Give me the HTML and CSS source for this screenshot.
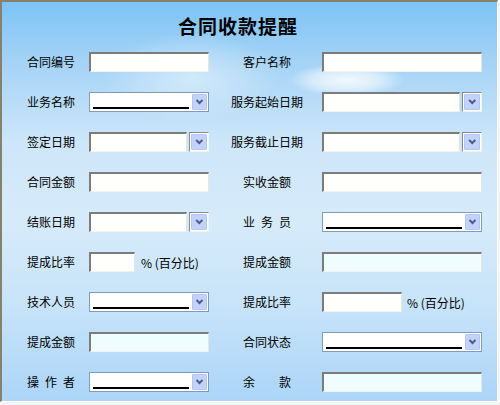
FILE: index.html
```html
<!DOCTYPE html>
<html lang="zh-CN">
    <head>
        <meta charset="utf-8"/>
        <title>合同收款提醒</title>
        <link rel="stylesheet" href="styles.css">
    </head>
    <body>
        <div class="frame">
            <div class="panel">
                <div class="title">合同收款提醒</div>

                <div class="form">
                    <div class="row">
                        <span class="lbl">合同编号</span>
                        <div class="fld-l"><span class="inp w120"></span></div>
                        <div class="lbl-r"><span class="lbl">客户名称</span></div>
                        <div class="fld-r"><span class="inp w160"></span></div>
                    </div>

                    <div class="row">
                        <span class="lbl">业务名称</span>
                        <div class="fld-l">
                            <span class="sel w120"><i class="line"></i><i class="arrow"></i></span>
                        </div>
                        <div class="lbl-r"><span class="lbl wide">服务起始日期</span></div>
                        <div class="fld-r">
                            <span class="inp w137"></span><span class="dbtn"><i class="arrow"></i></span>
                        </div>
                    </div>

                    <div class="row">
                        <span class="lbl">签定日期</span>
                        <div class="fld-l">
                            <span class="inp w97"></span><span class="dbtn"><i class="arrow"></i></span>
                        </div>
                        <div class="lbl-r"><span class="lbl wide">服务截止日期</span></div>
                        <div class="fld-r">
                            <span class="inp w137"></span><span class="dbtn"><i class="arrow"></i></span>
                        </div>
                    </div>

                    <div class="row">
                        <span class="lbl">合同金额</span>
                        <div class="fld-l"><span class="inp w120"></span></div>
                        <div class="lbl-r"><span class="lbl">实收金额</span></div>
                        <div class="fld-r"><span class="inp w160"></span></div>
                    </div>

                    <div class="row">
                        <span class="lbl">结账日期</span>
                        <div class="fld-l">
                            <span class="inp w97"></span><span class="dbtn"><i class="arrow"></i></span>
                        </div>
                        <div class="lbl-r"><span class="lbl">业 务 员</span></div>
                        <div class="fld-r">
                            <span class="sel w160"><i class="line"></i><i class="arrow"></i></span>
                        </div>
                    </div>

                    <div class="row">
                        <span class="lbl">提成比率</span>
                        <div class="fld-l">
                            <span class="inp w46"></span><span class="pct">% (百分比)</span>
                        </div>
                        <div class="lbl-r"><span class="lbl">提成金额</span></div>
                        <div class="fld-r"><span class="inp w160 ro"></span></div>
                    </div>

                    <div class="row">
                        <span class="lbl">技术人员</span>
                        <div class="fld-l">
                            <span class="sel w120"><i class="line"></i><i class="arrow"></i></span>
                        </div>
                        <div class="lbl-r"><span class="lbl">提成比率</span></div>
                        <div class="fld-r">
                            <span class="inp w80"></span><span class="pct">% (百分比)</span>
                        </div>
                    </div>

                    <div class="row">
                        <span class="lbl">提成金额</span>
                        <div class="fld-l"><span class="inp w120 ro"></span></div>
                        <div class="lbl-r"><span class="lbl">合同状态</span></div>
                        <div class="fld-r">
                            <span class="sel w160"><i class="line"></i><i class="arrow"></i></span>
                        </div>
                    </div>

                    <div class="row">
                        <span class="lbl">操 作 者</span>
                        <div class="fld-l">
                            <span class="sel w120"><i class="line"></i><i class="arrow"></i></span>
                        </div>
                        <div class="lbl-r"><span class="lbl">余 款</span></div>
                        <div class="fld-r"><span class="inp w160 ro"></span></div>
                    </div>
                </div>
            </div>
        </div>
    </body>
</html>
```

FILE: styles.css
```css
*{margin:0;padding:0;box-sizing:border-box;}

body{
    background: #f4f4f0;
    font-family: "Noto Sans CJK SC", "DejaVu Sans", sans-serif;
    font-size: 12px;
    color: #000;
}

.frame{
    width: 498px;
    height: 402px;
    border-style: solid;
    border-width: 2px 1px 1px 2px;
    border-color: #86806c #ffffff #ffffff #86806c;
}

.panel{
    height: 100%;
    background:
        radial-gradient(ellipse 58px 17px at 345px 78px, rgba(255,255,255,0.85), rgba(255,255,255,0.5) 60%, rgba(255,255,255,0) 100%),
        radial-gradient(ellipse 90px 45px at 190px 75px, rgba(255,255,255,0.45), rgba(255,255,255,0) 100%),
        linear-gradient(180deg, #7cc3f4 0%, #a2d2f6 14%, #cde6f9 35%, #d6ebfa 55%, #c8e4f9 75%, #acd5f8 100%);
}

.title{
    height: 50px;
    line-height: 48px;
    padding-left: 176px;
    font-size: 19px;
    font-weight: bold;
    letter-spacing: 1px;
}

.form{
    padding-left: 25px;
}

.row{
    display: flex;
    align-items: center;
    height: 20px;
    margin-bottom: 20px;
}

.lbl{
    display: inline-block;
    width: 48px;
    text-align-last: justify;
    white-space: nowrap;
    line-height: 20px;
}

.lbl.wide{
    width: auto;
    text-align-last: auto;
}

.fld-l{
    display: flex;
    align-items: center;
    width: 120px;
    margin-left: 14px;
}

.lbl-r{
    width: 113px;
    padding-left: 3px;
    text-align: center;
}

.fld-r{
    display: flex;
    align-items: center;
    width: 160px;
}

.inp{
    display: block;
    height: 20px;
    background: #fffffc;
    border-style: solid;
    border-width: 2px 1px 1px 2px;
    border-color: #7c7c7c #e6e6e0 #f4f4ee #7c7c7c;
}

.inp.ro{
    background: #effdff;
}

.w46{ width: 46px; }
.w80{ width: 80px; }
.w97{ width: 98px; }
.w120{ width: 120px; }
.w137{ width: 138px; }
.w160{ width: 160px; }

.dbtn{
    display: flex;
    width: 20px;
    height: 20px;
    margin-left: 2px;
    padding: 1px;
    background: #fff;
    border-style: solid;
    border-width: 1px;
    border-color: #8a8a8a #f4f4ee #f4f4ee #8a8a8a;
}

.sel{
    display: flex;
    align-items: stretch;
    height: 20px;
    padding: 1px;
    background: #fff;
    border: 1px solid #7f9db9;
}

.line{
    flex: 1;
    align-self: flex-end;
    height: 2px;
    margin: 0 3px 1px 2px;
    background: #000;
}

.arrow{
    display: block;
    width: 15px;
    flex: none;
    background: #c3d2fb url("data:image/svg+xml,%3Csvg xmlns='http://www.w3.org/2000/svg' width='15' height='16'%3E%3Cpolyline points='4.5,6 7.5,9 10.5,6' fill='none' stroke='%234d6185' stroke-width='2'/%3E%3C/svg%3E") center no-repeat;
    border: 1px solid #b4c6f4;
    border-radius: 1px;
}

.dbtn .arrow{
    width: 100%;
}

.pct{
    margin-left: 6px;
    white-space: nowrap;
}

.fld-r .pct{
    margin-left: 5px;
}
```
